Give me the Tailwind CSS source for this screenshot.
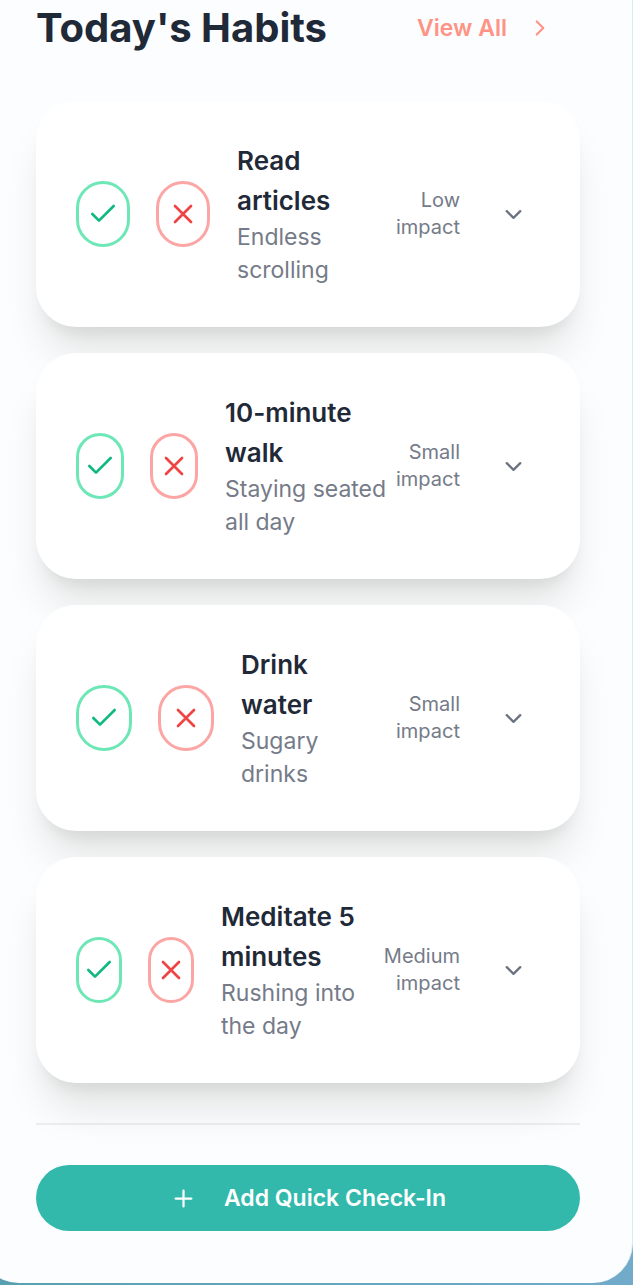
<!DOCTYPE html>
<html lang="en">
<head>
<meta charset="utf-8">
<meta name="viewport" content="width=device-width, initial-scale=1">
<title>Today's Habits</title>
<script src="https://cdn.jsdelivr.net/npm/@tailwindcss/browser@4"></script>
</head>
<body class="min-h-screen overflow-x-hidden bg-linear-to-r from-[#58a0b0] to-[#72abca] font-['Inter',sans-serif] text-[#1f2937]">
<svg class="hidden" aria-hidden="true">
  <symbol id="check" viewBox="0 0 24 24"><path d="M20 6 9 17l-5-5"/></symbol>
  <symbol id="cross" viewBox="0 0 24 24"><path d="M18 6 6 18M6 6l12 12"/></symbol>
  <symbol id="down" viewBox="0 0 24 24"><path d="m6 9 6 6 6-6"/></symbol>
  <symbol id="right" viewBox="0 0 24 24"><path d="m9 18 6-6-6-6"/></symbol>
  <symbol id="plus" viewBox="0 0 24 24"><path d="M5 12h14M12 5v14"/></symbol>
</svg>
<main class="-ml-[21px] rounded-b-[40px] border-r border-[#d8edf1] bg-[#fcfdfe] pr-[52px] pb-[52px] pl-[57px]">
  <header class="mb-[45px] flex items-center justify-between">
    <h1 class="text-[40px] leading-[56px] font-bold">Today's Habits</h1>
    <a href="#" class="flex items-center gap-5 pr-[27px] text-[23px] leading-8 font-semibold text-[#ff9385]">View All
      <svg class="size-[26px] fill-none stroke-current stroke-2" stroke-linecap="round" stroke-linejoin="round" aria-hidden="true"><use href="#right"/></svg>
    </a>
  </header>

  <ul class="flex flex-col gap-[26px]">
    <li class="flex items-center rounded-[40px] bg-white p-10 shadow-[0_33px_42px_-8px_rgb(0_16_8/0.1),0_13px_17px_-10px_rgb(0_16_8/0.1)]">
      <div class="flex shrink-0 gap-[26px]">
        <button aria-label="Done" class="flex h-[66px] w-[54px] items-center justify-center rounded-full border-3 border-[#6ee7b7] text-[#10b981]"><svg class="size-8 shrink-0 fill-none stroke-current stroke-2" stroke-linecap="round" stroke-linejoin="round"><use href="#check"/></svg></button>
        <button aria-label="Missed" class="flex h-[66px] w-[54px] items-center justify-center rounded-full border-3 border-[#fca5a5] text-[#ef4444]"><svg class="size-8 shrink-0 fill-none stroke-current stroke-2" stroke-linecap="round" stroke-linejoin="round"><use href="#cross"/></svg></button>
      </div>
      <div class="ml-[27px] min-w-0 flex-1">
        <h2 class="text-[26px] leading-10 font-semibold">Read<br>articles</h2>
        <p class="text-[23px] leading-[33px] text-[#757b88]">Endless<br>scrolling</p>
      </div>
      <p class="shrink-0 text-right text-[20px] leading-[27px] text-[#757b88]">Low<br>impact</p>
      <button aria-label="Show details" class="ml-[27px] shrink-0 p-[13px] text-[#6b7280]"><svg class="size-[27px] fill-none stroke-current stroke-2" stroke-linecap="round" stroke-linejoin="round"><use href="#down"/></svg></button>
    </li>
    <li class="flex items-center rounded-[40px] bg-white p-10 shadow-[0_33px_42px_-8px_rgb(0_16_8/0.1),0_13px_17px_-10px_rgb(0_16_8/0.1)]">
      <div class="flex shrink-0 gap-[26px]">
        <button aria-label="Done" class="flex h-[66px] w-[48px] items-center justify-center rounded-full border-3 border-[#6ee7b7] text-[#10b981]"><svg class="size-8 shrink-0 fill-none stroke-current stroke-2" stroke-linecap="round" stroke-linejoin="round"><use href="#check"/></svg></button>
        <button aria-label="Missed" class="flex h-[66px] w-[48px] items-center justify-center rounded-full border-3 border-[#fca5a5] text-[#ef4444]"><svg class="size-8 shrink-0 fill-none stroke-current stroke-2" stroke-linecap="round" stroke-linejoin="round"><use href="#cross"/></svg></button>
      </div>
      <div class="ml-[27px] min-w-0 flex-1">
        <h2 class="text-[26px] leading-10 font-semibold">10-minute<br>walk</h2>
        <p class="text-[23px] leading-[33px] text-[#757b88]">Staying seated<br>all day</p>
      </div>
      <p class="shrink-0 text-right text-[20px] leading-[27px] text-[#757b88]">Small<br>impact</p>
      <button aria-label="Show details" class="ml-[27px] shrink-0 p-[13px] text-[#6b7280]"><svg class="size-[27px] fill-none stroke-current stroke-2" stroke-linecap="round" stroke-linejoin="round"><use href="#down"/></svg></button>
    </li>
    <li class="flex items-center rounded-[40px] bg-white p-10 shadow-[0_33px_42px_-8px_rgb(0_16_8/0.1),0_13px_17px_-10px_rgb(0_16_8/0.1)]">
      <div class="flex shrink-0 gap-[26px]">
        <button aria-label="Done" class="flex h-[66px] w-[56px] items-center justify-center rounded-full border-3 border-[#6ee7b7] text-[#10b981]"><svg class="size-8 shrink-0 fill-none stroke-current stroke-2" stroke-linecap="round" stroke-linejoin="round"><use href="#check"/></svg></button>
        <button aria-label="Missed" class="flex h-[66px] w-[56px] items-center justify-center rounded-full border-3 border-[#fca5a5] text-[#ef4444]"><svg class="size-8 shrink-0 fill-none stroke-current stroke-2" stroke-linecap="round" stroke-linejoin="round"><use href="#cross"/></svg></button>
      </div>
      <div class="ml-[27px] min-w-0 flex-1">
        <h2 class="text-[26px] leading-10 font-semibold">Drink<br>water</h2>
        <p class="text-[23px] leading-[33px] text-[#757b88]">Sugary<br>drinks</p>
      </div>
      <p class="shrink-0 text-right text-[20px] leading-[27px] text-[#757b88]">Small<br>impact</p>
      <button aria-label="Show details" class="ml-[27px] shrink-0 p-[13px] text-[#6b7280]"><svg class="size-[27px] fill-none stroke-current stroke-2" stroke-linecap="round" stroke-linejoin="round"><use href="#down"/></svg></button>
    </li>
    <li class="flex items-center rounded-[40px] bg-white p-10 shadow-[0_33px_42px_-8px_rgb(0_16_8/0.1),0_13px_17px_-10px_rgb(0_16_8/0.1)]">
      <div class="flex shrink-0 gap-[26px]">
        <button aria-label="Done" class="flex h-[66px] w-[46px] items-center justify-center rounded-full border-3 border-[#6ee7b7] text-[#10b981]"><svg class="size-8 shrink-0 fill-none stroke-current stroke-2" stroke-linecap="round" stroke-linejoin="round"><use href="#check"/></svg></button>
        <button aria-label="Missed" class="flex h-[66px] w-[46px] items-center justify-center rounded-full border-3 border-[#fca5a5] text-[#ef4444]"><svg class="size-8 shrink-0 fill-none stroke-current stroke-2" stroke-linecap="round" stroke-linejoin="round"><use href="#cross"/></svg></button>
      </div>
      <div class="ml-[27px] min-w-0 flex-1">
        <h2 class="text-[26px] leading-10 font-semibold">Meditate 5<br>minutes</h2>
        <p class="text-[23px] leading-[33px] text-[#757b88]">Rushing into<br>the day</p>
      </div>
      <p class="shrink-0 text-right text-[20px] leading-[27px] text-[#757b88]">Medium<br>impact</p>
      <button aria-label="Show details" class="ml-[27px] shrink-0 p-[13px] text-[#6b7280]"><svg class="size-[27px] fill-none stroke-current stroke-2" stroke-linecap="round" stroke-linejoin="round"><use href="#down"/></svg></button>
    </li>
  </ul>

  <div class="mt-10 border-t-2 border-[#eceef0] pt-10">
    <button class="flex h-[66px] w-full items-center justify-center gap-[27px] rounded-full bg-[#32b9ac] text-[23px] font-semibold text-white">
      <svg class="size-[27px] fill-none stroke-current stroke-2" stroke-linecap="round" stroke-linejoin="round" aria-hidden="true"><use href="#plus"/></svg>
      Add Quick Check-In
    </button>
  </div>
</main>
</body>
</html>
